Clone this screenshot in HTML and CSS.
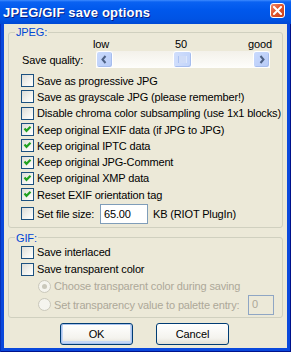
FILE: index.html
```html
<!DOCTYPE html>
<html>
<head>
<meta charset="utf-8">
<title>JPEG/GIF save options</title>
<link rel="stylesheet" href="styles.css">
</head>
<body>
<div class="window">
  <div class="titlebar">
    <span class="title">JPEG/GIF save options</span>
    <span class="close"><svg width="9" height="9" viewBox="0 0 9 9"><path d="M1 1 L8 8 M8 1 L1 8" stroke="#fff" stroke-width="2" stroke-linecap="square"/></svg></span>
  </div>
  <div class="client">
    <fieldset class="group jpeg">
      <legend>JPEG:</legend>
      <div class="scale"><span class="lo">low</span><span class="mid">50</span><span>good</span></div>
      <div class="quality">
        <span class="qlabel">Save quality:</span>
        <div class="scrollbar">
          <span class="sb-btn"><svg width="15" height="15" viewBox="0 0 15 15"><path d="M8.5 4 L5.5 7.5 L8.5 11" fill="none" stroke="#4D6185" stroke-width="2"/></svg></span>
          <span class="track"><span class="thumb"><svg width="9" height="7" viewBox="0 0 9 7"><path d="M1 0v7M3 0v7M5 0v7M7 0v7" stroke="#8DA8E6" stroke-width="1"/><path d="M2 0v7M4 0v7M6 0v7M8 0v7" stroke="#F4F8FF" stroke-width="1"/></svg></span></span>
          <span class="sb-btn"><svg width="15" height="15" viewBox="0 0 15 15"><path d="M6.5 4 L9.5 7.5 L6.5 11" fill="none" stroke="#4D6185" stroke-width="2"/></svg></span>
        </div>
      </div>
      <div class="options">
        <label class="check"><span class="box"></span>Save as progressive JPG</label>
        <label class="check"><span class="box"></span>Save as grayscale JPG (please remember!)</label>
        <label class="check"><span class="box"></span>Disable chroma color subsampling (use 1x1 blocks)</label>
        <label class="check"><span class="box"><svg width="11" height="11" viewBox="0 0 11 11"><path d="M2.5 4.5 L4.5 6.8 L8.5 2.8" fill="none" stroke="#21A121" stroke-width="2.2"/></svg></span>Keep original EXIF data (if JPG to JPG)</label>
        <label class="check"><span class="box"><svg width="11" height="11" viewBox="0 0 11 11"><path d="M2.5 4.5 L4.5 6.8 L8.5 2.8" fill="none" stroke="#21A121" stroke-width="2.2"/></svg></span>Keep original IPTC data</label>
        <label class="check"><span class="box"><svg width="11" height="11" viewBox="0 0 11 11"><path d="M2.5 4.5 L4.5 6.8 L8.5 2.8" fill="none" stroke="#21A121" stroke-width="2.2"/></svg></span>Keep original JPG-Comment</label>
        <label class="check"><span class="box"><svg width="11" height="11" viewBox="0 0 11 11"><path d="M2.5 4.5 L4.5 6.8 L8.5 2.8" fill="none" stroke="#21A121" stroke-width="2.2"/></svg></span>Keep original XMP data</label>
        <label class="check"><span class="box"><svg width="11" height="11" viewBox="0 0 11 11"><path d="M2.5 4.5 L4.5 6.8 L8.5 2.8" fill="none" stroke="#21A121" stroke-width="2.2"/></svg></span>Reset EXIF orientation tag</label>
        <div class="check filesize"><span class="box"></span><span class="fslabel">Set file size:</span><span class="edit">65.00</span><span class="unit">KB (RIOT PlugIn)</span></div>
      </div>
    </fieldset>
    <fieldset class="group gif">
      <legend>GIF:</legend>
      <label class="check gifrow"><span class="box"></span>Save interlaced</label>
      <label class="check gifrow"><span class="box"></span>Save transparent color</label>
      <div class="radio r1"><span class="rbtn on"></span>Choose transparent color during saving</div>
      <div class="radio r2"><span class="rbtn"></span>Set transparency value to palette entry:<span class="edit small">0</span></div>
    </fieldset>
    <div class="buttons">
      <span class="btn default">OK</span>
      <span class="btn">Cancel</span>
    </div>
  </div>
</div>
</body>
</html>
```
FILE: styles.css
```css
* { box-sizing: border-box; }
html, body { margin: 0; padding: 0; }
body {
  width: 291px;
  height: 352px;
  overflow: hidden;
  font-family: "Liberation Sans", Arial, sans-serif;
  font-size: 11px;
  letter-spacing: -0.15px;
  color: #000;
}
.window {
  height: 352px;
  display: flex;
  flex-direction: column;
  background: #0A48DC;
  box-shadow: inset 1px 0 0 #0831B8, inset -1px 0 0 #00138C, inset 0 -1px 0 #00138C;
}
.titlebar {
  height: 24px;
  display: flex;
  align-items: center;
  padding: 0 6px 0 3px;
  background: linear-gradient(#3D8BFF 0, #0A62F2 2px, #0058EC 40%, #0053E4 80%, #0049D4 100%);
}
.title {
  flex: 1;
  padding-top: 1px;
  color: #fff;
  font-weight: bold;
  font-size: 13px;
  letter-spacing: 0.2px;
  text-shadow: 1px 1px 0 #0A1E80;
  white-space: nowrap;
}
.close {
  width: 15px;
  height: 15px;
  align-self: flex-start;
  margin-top: 3px;
  border: 1px solid #fff;
  border-radius: 3px;
  background: linear-gradient(135deg, #F08A6A 0%, #E2552D 45%, #C7401C 100%);
  display: flex;
  align-items: center;
  justify-content: center;
}
.client {
  flex: 1;
  margin: 0 4px 4px 4px;
  padding: 2px 4px 0 4px;
  background: #ECE9D8;
  display: flex;
  flex-direction: column;
}
fieldset.group {
  margin: 0;
  padding: 0 0 3px 0;
  border: 1px solid #D0D0BF;
  border-radius: 3px;
  min-width: 0;
}
legend {
  margin-left: 6px;
  padding: 0 1px;
  color: #0046D5;
  line-height: 12px;
}
.scale {
  display: flex;
  padding-left: 84px;
  line-height: 13px;
}
.scale .lo { width: 82px; }
.scale .mid { width: 73px; }
.quality {
  display: flex;
  align-items: center;
  height: 17px;
  padding-left: 13px;
}
.qlabel { width: 74px; padding-top: 1px; }
.scrollbar {
  width: 174px;
  height: 17px;
  display: flex;
  background: linear-gradient(#F3F1EA, #FEFEFB);
}
.sb-btn {
  width: 17px;
  height: 17px;
  border: 1px solid #fff;
  border-radius: 3px;
  background: linear-gradient(135deg, #C9DAFD, #B7CBF7);
  display: flex;
  align-items: center;
  justify-content: center;
  box-shadow: inset -1px -1px 0 #A6BDEE;
}
.track {
  flex: 1;
  display: flex;
  padding-left: 60px;
}
.thumb {
  width: 19px;
  height: 17px;
  border: 1px solid #fff;
  border-radius: 3px;
  background: linear-gradient(90deg, #D0DEFC, #C2D4FA);
  box-shadow: inset -1px -1px 0 #A6BDEE;
  display: flex;
  align-items: center;
  justify-content: center;
}
.options { margin-top: 4.5px; }
.check {
  display: flex;
  align-items: center;
  height: 16.3px;
  padding-left: 12px;
  white-space: nowrap;
}
.box {
  width: 13px;
  height: 13px;
  flex: none;
  margin-right: 3px;
  border: 1px solid #1C5180;
  background: linear-gradient(135deg, #DCDCD7 0%, #F4F4F0 60%, #FFFFFF 100%);
  display: flex;
  align-items: center;
  justify-content: center;
}
.check.filesize {
  height: 20px;
  margin-top: 1px;
}
.fslabel { width: 63px; }
.edit {
  height: 20px;
  width: 48px;
  border: 1px solid #7F9DB9;
  background: #fff;
  padding: 0 3px;
  display: flex;
  align-items: center;
}
.unit { margin-left: 5px; }
fieldset.gif { margin-top: 4px; padding-bottom: 2px; }
.check.gifrow { height: 17px; }
.radio {
  display: flex;
  align-items: center;
  padding-left: 29px;
  padding-right: 8px;
  color: #ACA899;
  white-space: nowrap;
}
.radio.r1 { height: 17px; }
.radio.r2 { height: 20px; }
.rbtn {
  width: 13px;
  height: 13px;
  flex: none;
  margin-right: 3px;
  border: 1px solid #CAC8BB;
  border-radius: 50%;
  background: #F5F4EE;
  display: flex;
  align-items: center;
  justify-content: center;
}
.rbtn.on::after {
  content: "";
  width: 5px;
  height: 5px;
  border-radius: 50%;
  background: #CAC8BB;
}
.edit.small {
  width: 26px;
  margin-left: auto;
  background: transparent;
  border-color: #8FA6C4;
  color: #ACA899;
  align-items: flex-start;
  padding-top: 2px;
}
.buttons {
  display: flex;
  justify-content: center;
  gap: 23px;
  margin-top: 5px;
  padding-right: 2px;
}
.btn {
  width: 73px;
  height: 22px;
  border: 1px solid #003C74;
  border-radius: 3px;
  background: linear-gradient(#FFFFFF, #F4F3EE 70%, #E3E0D5);
  display: flex;
  align-items: center;
  justify-content: center;
}
.btn.default {
  box-shadow: inset 0 0 0 1px #A9C3EE, inset 0 -1px 0 2px #C6D7F5;
}
```
